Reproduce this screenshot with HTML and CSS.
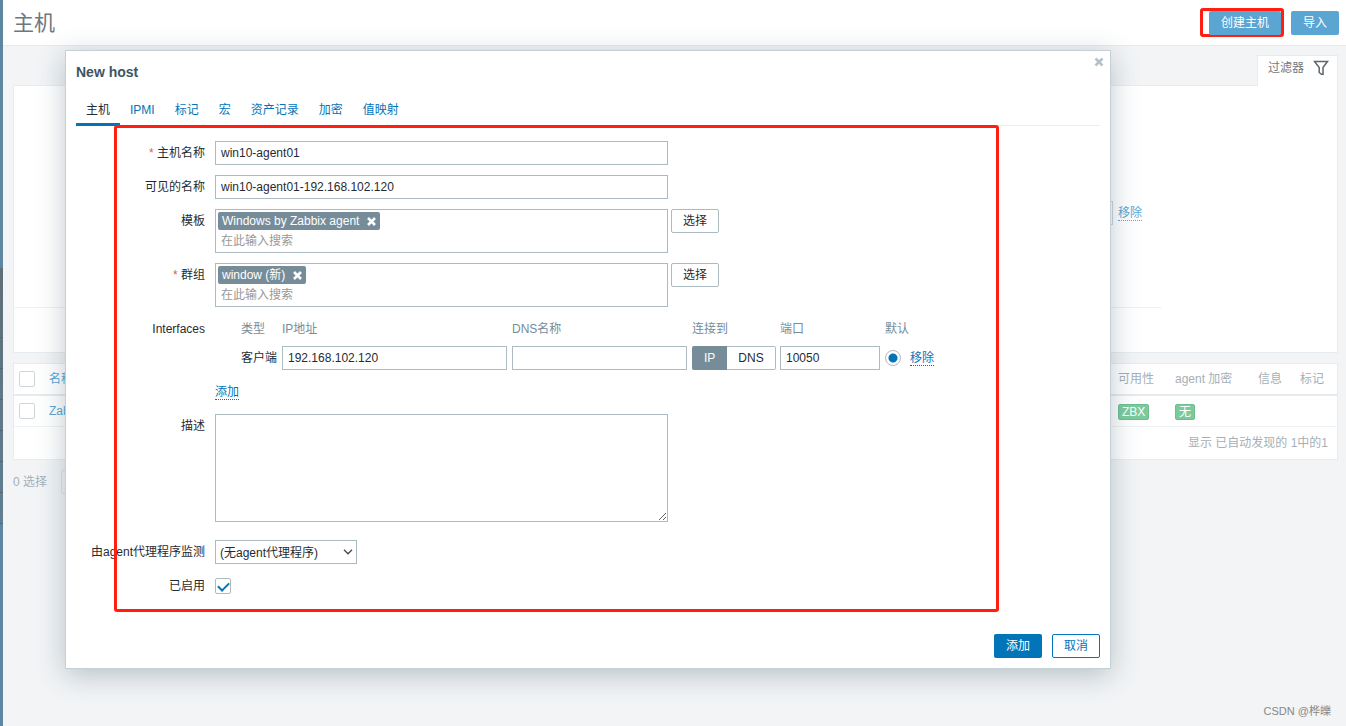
FILE: index.html
```
<!DOCTYPE html>
<html lang="zh-CN">
<head>
<meta charset="utf-8">
<title>主机</title>
<link rel="stylesheet" href="styles.css">
</head>
<body>
<div class="sidebar"></div>
<div class="page">
  <header class="page-header">
    <h1>主机</h1>
    <div class="header-actions">
      <div class="marked"><button type="button" class="btn btn-faded">创建主机</button></div>
      <button type="button" class="btn btn-faded">导入</button>
    </div>
  </header>
  <main class="content">
    <div class="filter-tabs">
      <button type="button" class="filter-tab">过滤器
        <svg width="16" height="16" viewBox="0 0 16 16" fill="none" stroke="#5d666b" stroke-width="1.5"><path d="M1.500 1.500h13L10 7.500v6.800H8.500L6.200 12.500V7.500z"/></svg>
      </button>
    </div>
    <section class="filter">
      <div class="filter-row"><input type="text" class="filter-input" aria-label="标记值"><a href="#" class="link faded">移除</a></div>
      <hr class="filter-line">
    </section>
    <table class="hosts">
      <colgroup><col class="c-check"><col><col class="c-avail"><col class="c-enc"><col class="c-info"><col class="c-info"></colgroup>
      <thead>
        <tr><th><input type="checkbox" class="check faded" aria-label="全选"></th><th><a href="#">名称</a></th><th>可用性</th><th>agent 加密</th><th>信息</th><th>标记</th></tr>
      </thead>
      <tbody>
        <tr><td><input type="checkbox" class="check faded" aria-label="Zabbix server"></td><td><a href="#">Zabbix server</a></td><td><span class="status">ZBX</span></td><td><span class="status">无</span></td><td></td><td></td></tr>
        <tr><td colspan="6" class="total">显示 已自动发现的 1中的1</td></tr>
      </tbody>
    </table>
    <div class="bulk"><span>0 选择</span><button type="button" class="btn btn-bulk">启用</button></div>
  </main>
</div>

<div class="modal" role="dialog" aria-labelledby="modal-title">
  <button type="button" class="close" aria-label="关闭"><svg width="10" height="10" viewBox="0 0 10 10" stroke="#b4c1c8" stroke-width="2.500"><path d="M1.500 1.500l7 7M8.500 1.500l-7 7"/></svg></button>
  <h2 id="modal-title">New host</h2>
  <nav class="tabs">
    <a href="#" class="active">主机</a><a href="#">IPMI</a><a href="#">标记</a><a href="#">宏</a><a href="#">资产记录</a><a href="#">加密</a><a href="#">值映射</a>
  </nav>
  <form class="form">
    <label for="host"><span class="req">*</span> 主机名称</label>
    <div><input id="host" type="text" class="text wide" value="win10-agent01"></div>

    <label for="visible">可见的名称</label>
    <div><input id="visible" type="text" class="text wide" value="win10-agent01-192.168.102.120"></div>

    <label for="templates">模板</label>
    <div class="picker">
      <div class="multi">
        <span class="tag">Windows by Zabbix agent <button type="button" aria-label="移除"><svg width="9" height="9" viewBox="0 0 9 9" stroke="#fff" stroke-width="2.600"><path d="M1 1l7 7M8 1L1 8"/></svg></button></span>
        <input id="templates" type="text" placeholder="在此输入搜索">
      </div>
      <button type="button" class="btn btn-select">选择</button>
    </div>

    <label for="groups"><span class="req">*</span> 群组</label>
    <div class="picker">
      <div class="multi">
        <span class="tag">window (新) <button type="button" aria-label="移除"><svg width="9" height="9" viewBox="0 0 9 9" stroke="#fff" stroke-width="2.600"><path d="M1 1l7 7M8 1L1 8"/></svg></button></span>
        <input id="groups" type="text" placeholder="在此输入搜索">
      </div>
      <button type="button" class="btn btn-select">选择</button>
    </div>

    <span class="label">Interfaces</span>
    <div>
      <table class="interfaces">
        <colgroup><col class="i-type"><col class="i-ip"><col class="i-dns"><col class="i-conn"><col class="i-port"><col class="i-def"><col class="i-act"></colgroup>
        <thead><tr><th>类型</th><th>IP地址</th><th>DNS名称</th><th>连接到</th><th>端口</th><th colspan="2">默认</th></tr></thead>
        <tbody><tr>
          <td>客户端</td>
          <td><input type="text" class="text" aria-label="IP地址" value="192.168.102.120"></td>
          <td><input type="text" class="text" aria-label="DNS名称"></td>
          <td><div class="segmented">
            <label><input type="radio" name="connect" checked><span>IP</span></label>
            <label><input type="radio" name="connect"><span>DNS</span></label>
          </div></td>
          <td><input type="text" class="text" aria-label="端口" value="10050"></td>
          <td><input type="radio" class="radio" name="default" aria-label="默认" checked></td>
          <td><a href="#" class="link">移除</a></td>
        </tr></tbody>
      </table>
      <div class="add-row"><a href="#" class="link">添加</a></div>
    </div>

    <label for="description">描述</label>
    <div class="description"><textarea id="description" class="wide"></textarea></div>

    <label for="proxy">由agent代理程序监测</label>
    <div class="select">
      <select id="proxy"><option>(无agent代理程序)</option></select>
      <svg width="10" height="6" viewBox="0 0 10 6" fill="none" stroke="#3f474b" stroke-width="1.300"><path d="M1 .8l4 4 4-4"/></svg>
    </div>

    <label for="enabled">已启用</label>
    <div class="check-row"><input id="enabled" type="checkbox" class="check" checked></div>
  </form>
  <div class="modal-footer">
    <button type="button" class="btn btn-primary">添加</button>
    <button type="button" class="btn btn-outline">取消</button>
  </div>
  <div class="highlight"></div>
</div>
<div class="watermark">CSDN @桦皪</div>
</body>
</html>
```

FILE: styles.css
```
* { box-sizing: border-box; }

body {
  margin: 0;
  min-height: 100vh;
  display: flex;
  position: relative;
  overflow: hidden;
  background: #f2f4f6;
  color: #1f2c33;
  font: 12px/24px "Liberation Sans", Arial, "Noto Sans CJK SC", sans-serif;
}

button, input, select, textarea { font: inherit; color: inherit; margin: 0; }
button { cursor: pointer; }
a { color: #0275b8; text-decoration: none; }

.sidebar {
  width: 3px;
  background:
    repeating-linear-gradient(transparent 0, transparent 30px, #56656e 30px, #56656e 31px) 0 307px / 3px 217px no-repeat,
    linear-gradient(#5f6f79, #617f91) 0 268px / 3px 256px no-repeat,
    #5d87a1;
}

.page { flex: 1; min-width: 0; }

.page-header {
  height: 46px;
  padding: 0 7px 0 10px;
  display: flex;
  align-items: center;
  justify-content: space-between;
  background: #fff;
  border-bottom: 1px solid #e6eaed;
}

h1 { margin: 0; font-size: 21px; font-weight: 400; color: #6c7880; }

.header-actions { display: flex; align-items: center; gap: 7px; }

.marked {
  display: flex;
  height: 29px;
  padding-left: 6px;
  border: 3px solid #ff1e10;
  border-radius: 3px;
}

.btn {
  height: 24px;
  padding: 0 11px;
  border: 1px solid transparent;
  border-radius: 2px;
  line-height: 22px;
  white-space: nowrap;
}

.btn-faded { background: #5ba5d3; color: #fff; }
.btn-primary { background: #0275b8; color: #fff; }
.btn-outline { background: #fff; color: #0275b8; border-color: #0275b8; }
.btn-select { background: #fff; border-color: #acbbc2; }
.btn-bulk { background: transparent; color: #acb6bb; border-color: #dde3e6; }

.content { padding: 9px 8px 0 10px; }

.filter-tabs { display: flex; justify-content: flex-end; }

.filter-tab {
  height: 31px;
  margin-bottom: -1px;
  padding: 0 8px 6px 10px;
  display: flex;
  align-items: center;
  gap: 9px;
  position: relative;
  background: #fff;
  border: 1px solid #e8ecee;
  border-bottom: 0;
  color: #70797e;
}

.filter { padding: 115px 0 44px; background: #fff; border: 1px solid #e8ecee; }
.filter-row { display: flex; justify-content: flex-end; gap: 5px; padding-right: 195px; }
.filter-input { width: 150px; height: 24px; border: 1px solid #cdd6da; }
.filter-line { margin: 82px 175px 0 0; border: 0; border-top: 1px solid #f0f2f3; }

.link { align-self: center; line-height: 14px; border-bottom: 1px dotted #0275b8; }
.faded.link { color: #5ba5d3; border-color: #5ba5d3; }

.hosts {
  width: 100%;
  margin-top: 10px;
  table-layout: fixed;
  border-collapse: separate;
  border-spacing: 0;
  background: #fff;
  border: 1px solid #e8ecee;
  color: #a5b0b6;
}
.hosts th, .hosts td {
  height: 32px;
  padding: 0 5px;
  text-align: left;
  font-weight: 400;
  white-space: nowrap;
  line-height: 20px;
  border-bottom: 1px solid #f0f2f3;
}
.hosts th { padding-bottom: 1px; border-bottom: 2px solid #e6ebed; }
.hosts tbody tr:first-child td { height: 31px; }
.hosts tr:last-child td.total { border-bottom: 0; text-align: right; padding-right: 9px; }
.hosts a { color: #5ba5d3; }
.c-check { width: 30px; }
.c-avail { width: 57px; }
.c-enc { width: 83px; }
.c-info { width: 42px; }

.status {
  display: inline-block;
  height: 16px;
  padding: 0 3px;
  line-height: 14px;
  vertical-align: middle;
  background: #7acb9c;
  border: 1px solid #6fbd90;
  border-radius: 2px;
  color: #fff;
}

.bulk { display: flex; gap: 14px; margin-top: 10px; color: #a5b0b6; }

.check {
  appearance: none;
  display: block;
  width: 16px;
  height: 16px;
  background: #fff;
  border: 1px solid #acbbc2;
  border-radius: 2px;
}
.check:checked::before {
  content: "";
  display: block;
  width: 9px;
  height: 5px;
  margin: 3px 2px;
  border: solid #0275b8;
  border-width: 0 0 2px 2px;
  transform: rotate(-45deg);
}
.check.faded { border-color: #cdd6da; }

.modal {
  position: absolute;
  top: 50px;
  left: 65px;
  right: 235px;
  padding: 10px;
  background: #fff;
  border: 1px solid #c5d0d6;
  box-shadow: 0 6px 26px rgba(60, 85, 99, 0.320);
}

.close {
  position: absolute;
  top: 6px;
  right: 6px;
  padding: 0;
  border: 0;
  background: none;
  line-height: 10px;
}
.close svg, .tag svg { display: block; }

h2 { margin: 0; font-size: 14px; line-height: 22px; color: #3c5563; }

.tabs { display: flex; margin-top: 12px; border-bottom: 1px solid #ebeef0; }
.tabs a { height: 30px; padding: 0 10px; line-height: 30px; }
.tabs .active { color: #1f2c33; height: 31px; margin-bottom: -1px; border-bottom: 3px solid #0275b8; }

.form {
  display: grid;
  grid-template-columns: 129px 1fr;
  gap: 10px;
  margin-top: 15px;
}
.form > label, .label { text-align: right; white-space: nowrap; }
.req { color: #e45959; }
.form > div { min-width: 0; }

.text {
  display: block;
  width: 100%;
  height: 24px;
  padding: 0 5px;
  background: #fff;
  border: 1px solid #acbbc2;
}
.wide { width: 453px; }

.picker { display: flex; align-items: flex-start; gap: 3px; }
.multi { width: 453px; padding: 2px; border: 1px solid #acbbc2; }
.multi input {
  display: block;
  width: 100%;
  height: 20px;
  padding: 2px 3px 0;
  border: 0;
  background: none;
  line-height: 18px;
}
.multi input::placeholder { color: #999; }
.tag {
  display: flex;
  align-items: center;
  gap: 8px;
  width: fit-content;
  height: 18px;
  padding: 0 4px;
  background: #768d99;
  border-radius: 2px;
  color: #fff;
}
.tag button { padding: 0; border: 0; background: none; }

.interfaces { width: 745px; margin-left: 26px; table-layout: fixed; border-collapse: collapse; }
.interfaces th { padding: 0 0 5px; text-align: left; font-weight: 400; color: #768d99; }
.interfaces td { height: 24px; padding: 0 5px 0 0; white-space: nowrap; }
.i-type { width: 41px; }
.i-ip { width: 230px; }
.i-dns { width: 180px; }
.i-conn { width: 88px; }
.i-port { width: 105px; }
.i-def { width: 25px; }
.interfaces td:nth-child(1) { padding: 0; }
.interfaces td:nth-child(4) { padding-right: 4px; }
.interfaces .link, .add-row .link { display: inline-block; vertical-align: middle; }
.add-row { margin-top: 10px; }

.segmented { display: flex; line-height: 22px; }
.segmented label { position: relative; }
.segmented input { position: absolute; opacity: 0; }
.segmented span { display: block; padding: 0 11px; border: 1px solid #acbbc2; border-left: 0; border-radius: 0 2px 2px 0; }
.segmented label:first-child span { padding: 0 12px; border-width: 1px 0; border-radius: 2px 0 0 2px; }
.segmented input:checked + span { background: #768d99; border-color: #768d99; color: #fff; }

.radio {
  appearance: none;
  display: block;
  width: 16px;
  height: 16px;
  border: 1px solid #acbbc2;
  border-radius: 50%;
  background: radial-gradient(circle, #0275b8 4px, #fff 5px);
}

.description { padding-bottom: 8px; }
textarea { display: block; height: 108px; padding: 4px 5px; background: #fff; border: 1px solid #acbbc2; }

.select { display: grid; width: 142px; align-items: center; }
.select select {
  grid-area: 1 / 1;
  appearance: none;
  height: 24px;
  padding: 0 20px 0 4px;
  background: #fff;
  border: 1px solid #acbbc2;
  border-radius: 0;
}
.select svg { grid-area: 1 / 1; justify-self: end; margin-right: 4px; pointer-events: none; }

.check-row { display: flex; align-items: center; }

.modal-footer { display: flex; justify-content: flex-end; gap: 10px; margin-top: 36px; }

.highlight {
  position: absolute;
  top: 74px;
  left: 48px;
  right: 111px;
  bottom: 56px;
  border: 3px solid #ff1e10;
  border-radius: 3px;
  pointer-events: none;
}

.watermark {
  position: absolute;
  right: 15px;
  bottom: 3px;
  font-size: 11px;
  color: #888;
}
```
